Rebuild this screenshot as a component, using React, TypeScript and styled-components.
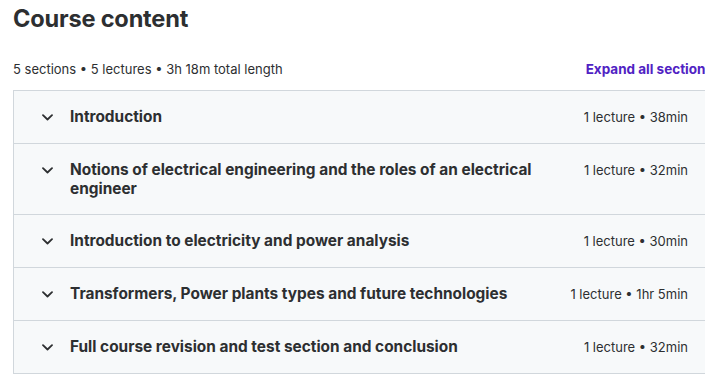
import styled, { createGlobalStyle } from "styled-components";

const GlobalStyle = createGlobalStyle`
    html, body {
        margin: 0;
        padding: 0;
        overflow: hidden;
        background: #ffffff;
    }
    body {
        font-family: Inter, "Noto Sans", sans-serif;
        color: #2d2f31;
    }
`

const Page = styled.div`
    width: 700px;
    padding: 4px 0 0 13px;
`

const Title = styled.h2`
    margin: 0;
    font-size: 23.6px;
    font-weight: 700;
    line-height: 30px;
    letter-spacing: -0.2px;
`

const SummaryBar = styled.div`
    display: flex;
    justify-content: space-between;
    align-items: center;
    margin-top: 25px;
    margin-bottom: 11px;
    height: 20px;
`

const Summary = styled.span`
    font-size: 13px;
    line-height: 20px;
`

const ExpandButton = styled.button`
    background: none;
    border: none;
    padding: 0;
    font-family: inherit;
    font-size: 13.5px;
    font-weight: 700;
    color: #5022c3;
    cursor: pointer;
    white-space: nowrap;
`

const Sections = styled.div`
    border: 1px solid #d1d7dc;
    border-bottom: none;
`

const SectionRow = styled.div`
    display: flex;
    align-items: flex-start;
    gap: 16px;
    padding: 16px 24px 16px 26px;
    background: #f7f9fa;
    border-bottom: 1px solid #d1d7dc;
    cursor: pointer;
`

const Chevron = styled.span`
    display: flex;
    align-items: center;
    justify-content: center;
    width: 14px;
    height: 20px;
    flex-shrink: 0;
    color: #2d2f31;
`

const SectionTitle = styled.span`
    flex: 1;
    font-size: 15.4px;
    font-weight: 700;
    line-height: 19px;
    padding-right: 32px;
`

const SectionMeta = styled.span`
    font-size: 13px;
    line-height: 20px;
    white-space: nowrap;
`

const sections = [
    { title: "Introduction", meta: "1 lecture • 38min" },
    { title: "Notions of electrical engineering and the roles of an electrical engineer", meta: "1 lecture • 32min" },
    { title: "Introduction to electricity and power analysis", meta: "1 lecture • 30min" },
    { title: "Transformers, Power plants types and future technologies", meta: "1 lecture • 1hr 5min" },
    { title: "Full course revision and test section and conclusion", meta: "1 lecture • 32min" },
];

function ChevronDown() {
    return (
        <svg width="11" height="7" viewBox="0 0 11 7" fill="none">
            <path d="M1 1.2L5.5 5.5L10 1.2" stroke="currentColor" strokeWidth="1.8" strokeLinecap="round" strokeLinejoin="round" />
        </svg>
    );
}

export default function App() {
    return (
        <>
            <GlobalStyle />
            <Page>
                <Title>Course content</Title>
                <SummaryBar>
                    <Summary>5 sections • 5 lectures • 3h 18m total length</Summary>
                    <ExpandButton>Expand all sections</ExpandButton>
                </SummaryBar>
                <Sections>
                    {sections.map((s) => (
                        <SectionRow key={s.title}>
                            <Chevron><ChevronDown /></Chevron>
                            <SectionTitle>{s.title}</SectionTitle>
                            <SectionMeta>{s.meta}</SectionMeta>
                        </SectionRow>
                    ))}
                </Sections>
            </Page>
        </>
    );
}
